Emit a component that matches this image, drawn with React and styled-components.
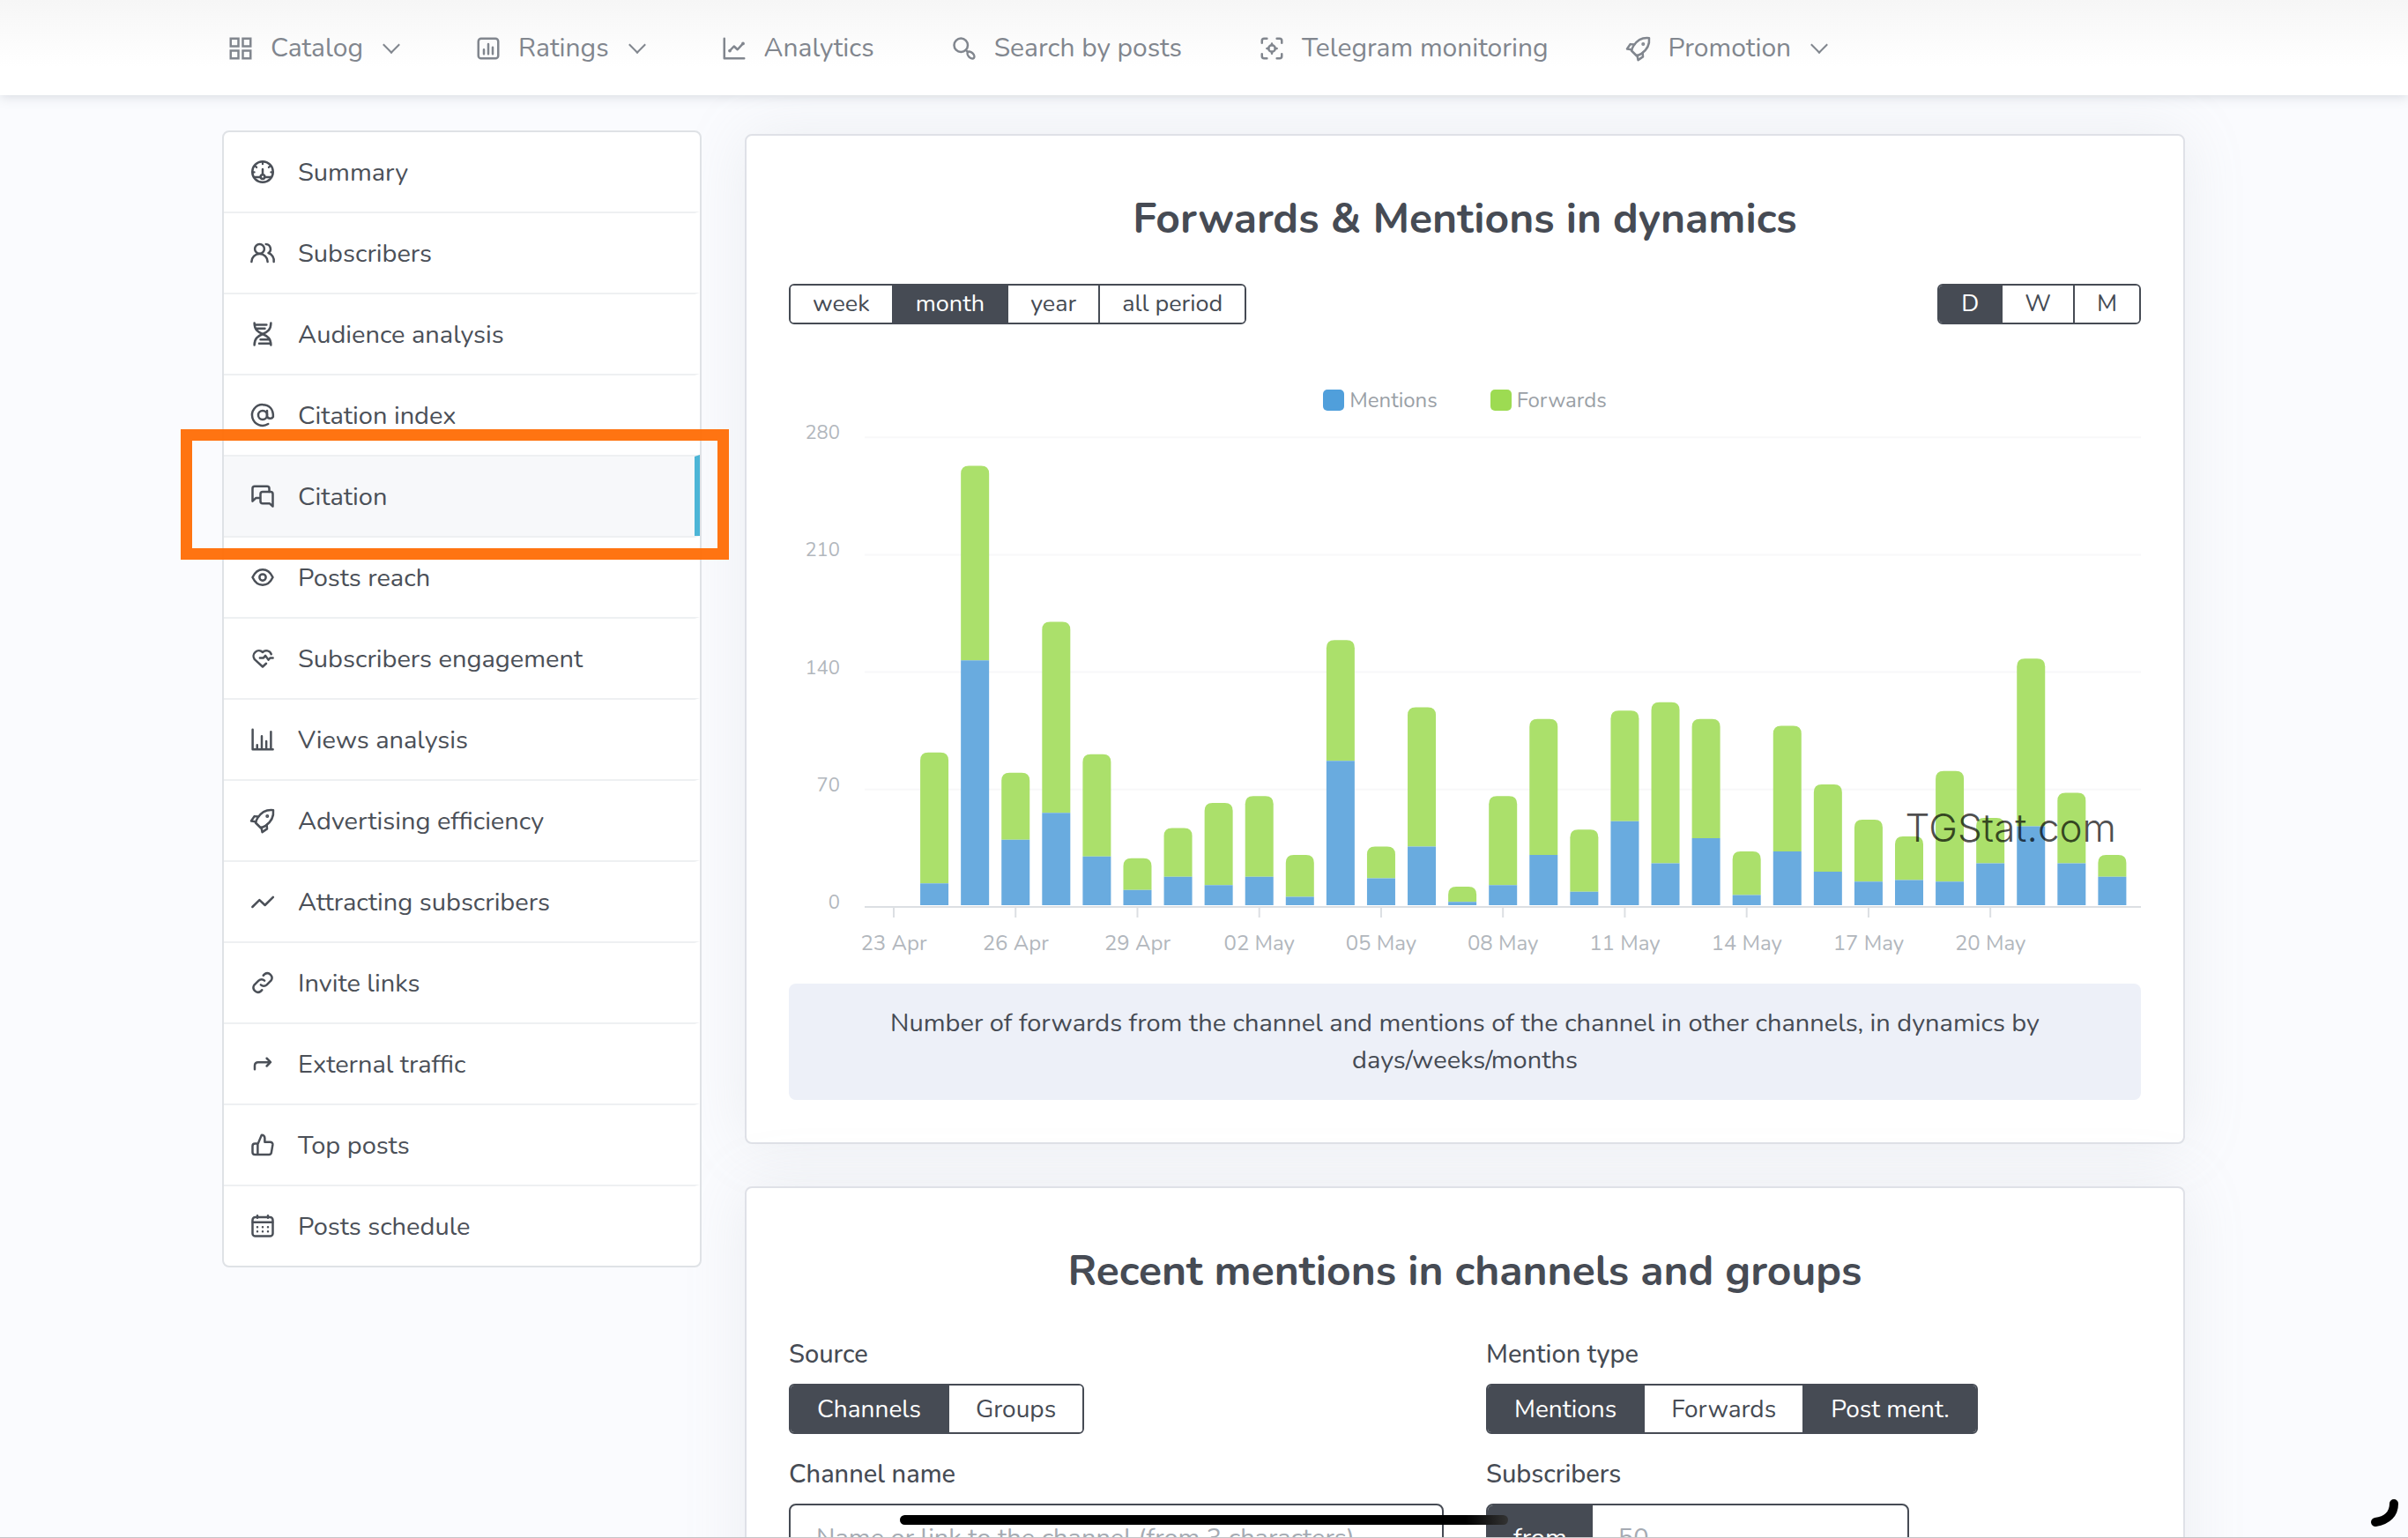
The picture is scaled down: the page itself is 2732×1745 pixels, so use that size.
import React, { useState } from "react";
import styled, { createGlobalStyle } from "styled-components";

const ink = "#464b54";
const sans = `Nunito, Lato, "Open Sans", sans-serif`;

const GlobalStyle = createGlobalStyle`
  *, *::before, *::after { box-sizing: border-box; }
  html, body { margin: 0; height: 100%; }
  body {
    overflow: hidden;
    background: #fafbfe;
    color: ${ink};
    font-family: ${sans};
    font-size: 29px;
  }
  button, input { font: inherit; color: inherit; }
`;

/* ---------- icons ---------- */

const IconSvg = styled.svg`
  flex: none;
  width: 30px;
  height: 30px;
  fill: none;
  stroke: currentColor;
  stroke-width: 2;
  stroke-linecap: round;
  stroke-linejoin: round;
`;

const icons = {
  apps: <path strokeLinejoin="miter" d="M3 3h7v7H3zM14 3h7v7h-7zM3 14h7v7H3zM14 14h7v7h-7z" />,
  chart: (
    <>
      <rect x="3" y="3" width="18" height="18" rx="2.5" />
      <path d="M8 13v4M12 8v9M16 11v6" />
    </>
  ),
  analytics: (
    <>
      <path d="M3 3v18h18M8 14l3.800-4 3.200 3 5-5.500" />
      <path d="M8 14v.01M20 7.500v.01" strokeWidth="3" />
    </>
  ),
  search: (
    <>
      <circle cx="9" cy="9" r="6.2" />
      <path d="M13.500 13.500l1.600 1.600" />
      <ellipse cx="18" cy="18" rx="2.3" ry="3.8" transform="rotate(-45 18 18)" />
    </>
  ),
  focus: (
    <>
      <path d="M3 7V5a2 2 0 0 1 2-2h2.500M16.500 3H19a2 2 0 0 1 2 2v2M21 17v2a2 2 0 0 1-2 2h-2.500M7.500 21H5a2 2 0 0 1-2-2v-2" />
      <circle cx="12" cy="12" r="3" />
      <path d="M12 7.500v1.500M12 15v1.500M7.500 12H9M15 12h1.500" />
    </>
  ),
  rocket: (
    <>
      <path d="M21.600 2.500C15 1.800 11 4 7.500 9.500c-1 1.600-1.600 3-1.900 4.500l4.600 4.600c1.500-.3 3-.9 4.500-1.900C20 13 22.300 9 21.600 2.500z" />
      <path d="M8.200 8.400l-3.700-.3-2.900 4.300 4.200.7M15.700 15.900l.3 3.600-4.400 3-.8-4.200" />
      <circle cx="16.2" cy="7.9" r="0.6" fill="currentColor" />
    </>
  ),
  dashboard: (
    <>
      <circle cx="12" cy="12" r="9.4" />
      <path d="M4 16.800h5.500M14.500 16.800H20M12 14V9.500" />
      <path strokeWidth="1.7" d="M12 3v2M5.600 7l.9.900M18.400 7l-.9.900M3 12.300h1.500M19.500 12.300H21" />
      <circle cx="12" cy="16.4" r="1.9" />
    </>
  ),
  users: (
    <>
      <circle cx="9.2" cy="8.3" r="4.3" />
      <path d="M1.900 20a7.300 7.300 0 0 1 14.600 0M15 4.100a4.300 4.300 0 0 1 2.200 7.900 7.300 7.300 0 0 1 4.900 8" />
    </>
  ),
  dna: (
    <>
      <path d="M4.500 2c0 6 3 8 7.500 10s7.500 4 7.500 10M19.500 2c0 6-3 8-7.500 10s-7.500 4-7.500 10" />
      <path d="M5.500 3.500h10M6.500 7h7.500M8.800 20.500h9.700M10 17h7.500" />
    </>
  ),
  at: (
    <>
      <circle cx="12" cy="12" r="4" />
      <path d="M16 8v5a3 3 0 0 0 5.500.5c.3-7-3.500-11-9.500-11a9.500 9.500 0 1 0 5 17.500" />
    </>
  ),
  chats: (
    <>
      <path d="M9 13.500H6l-3.200 3V5a2 2 0 0 1 2-2H16a2 2 0 0 1 2 2v3" />
      <path d="M21.200 21.200l-3-2.700H12a2 2 0 0 1-2-2V10a2 2 0 0 1 2-2h7.200a2 2 0 0 1 2 2z" />
    </>
  ),
  eye: (
    <>
      <path d="M2.800 12C5 7.400 8.300 5 12 5s7 2.400 9.200 7c-2.200 4.600-5.500 7-9.200 7s-7-2.400-9.200-7z" />
      <circle cx="12" cy="12" r="2.9" />
    </>
  ),
  heart: (
    <>
      <path d="M19.800 8.200A4.700 4.700 0 0 0 12 6.400a4.900 4.900 0 0 0-7.300 6.500L12 19.600l3.200-3" />
      <path d="M9.500 11.500h3.300l1.700-2 2.700 3.800 1.600-1.700h2.500" />
    </>
  ),
  bars: <path d="M2.900 3v18h18.400M7 20v-3M11.200 20V9M15.300 20v-6.500M19.500 20V5" />,
  trend: <path d="M2.700 16.800l6.400-6.300 5 4.700 7.400-7.300" />,
  link: (
    <path d="M10.300 13.900a4 4 0 0 0 5.400 0l4-4a4.200 4.200 0 0 0-5.800-5.800L12.600 5.400M13.700 10.100a4 4 0 0 0-5.400 0l-4 4a4.200 4.200 0 0 0 5.800 5.800l1.300-1.300" />
  ),
  forward: <path d="M4.800 17v-3.500a3 3 0 0 1 3-3h11.200M15.700 7l3.500 3.500-3.500 3.500" />,
  like: (
    <path d="M7.500 20.800V11.500l3.600-8.600a2.800 2.800 0 0 1 2.800 2.800v3.700h5a2.200 2.200 0 0 1 2.200 2.500l-1.200 7a2.200 2.200 0 0 1-2.200 1.900zM7.500 10.700H5a2.200 2.200 0 0 0-2.200 2.200v5.700A2.200 2.200 0 0 0 5 20.800h2.500" />
  ),
  calendar: (
    <>
      <rect x="2.8" y="4" width="18.4" height="17.2" rx="2.5" />
      <path d="M3 8.500h18M7.200 2.500v2M16.800 2.500v2M7.200 13v.01M12 13v.01M16.800 13v.01M7.200 17v.01M12 17v.01M16.800 17v.01" />
    </>
  ),
};

const Icon = ({ name }) => (
  <IconSvg viewBox="0 0 24 24" aria-hidden="true">{icons[name]}</IconSvg>
);

/* ---------- header ---------- */

const Header = styled.header`
  position: relative;
  z-index: 2;
  padding: 0 258px;
  background: linear-gradient(#f6f6f6, #fff 76px);
  box-shadow: 0 2px 12px rgba(120, 126, 140, 0.25);
`;

const Nav = styled.nav`
  display: flex;
  gap: 87px;
  height: 108px;
  padding-top: 2px;
  align-items: center;
`;

const NavLink = styled.a`
  display: flex;
  align-items: center;
  gap: 19px;
  color: #81868e;
  font-size: 30px;
  line-height: 40px;
  text-decoration: none;
  white-space: nowrap;
`;

const Chevron = styled.span`
  width: 14px;
  height: 14px;
  margin: 0 1px 8px 6px;
  border: solid currentColor;
  border-width: 0 2px 2px 0;
  transform: rotate(45deg);
`;

/* ---------- page ---------- */

const Page = styled.div`
  display: flex;
  align-items: flex-start;
  gap: 49px;
  padding: 40px 253px 0 252px;
`;

const Sidebar = styled.aside`
  position: relative;
  flex: 0 0 544px;
`;

const Menu = styled.ul`
  margin: 0;
  padding: 0;
  list-style: none;
  background: #fff;
  border: 2px solid #dfe2e6;
  border-radius: 8px;
`;

const MenuItem = styled.li`
  & + & a { border-top: 2px solid #eef0f2; }
`;

const MenuLink = styled.a`
  display: flex;
  align-items: center;
  gap: 25px;
  height: 92px;
  padding: 0 29px;
  border-right: 6px solid ${(p) => (p.$active ? "#4cb5d6" : "transparent")};
  background: ${(p) => (p.$active ? "#f7f8fa" : "transparent")};
  color: #4b5058;
  text-decoration: none;
  white-space: nowrap;

  ${MenuItem}:first-child & { height: 90px; }
`;

const Highlight = styled.div`
  position: absolute;
  z-index: 3;
  top: 339px;
  left: -47px;
  right: -31px;
  height: 148px;
  border: 13px solid rgba(255, 110, 8, 0.96);
  pointer-events: none;
`;

const Main = styled.main`
  display: grid;
  flex: 1;
  min-width: 0;
  gap: 48px;
  padding-top: 4px;
`;

const Card = styled.section`
  padding: 62px 48px 48px;
  background: #fff;
  border: 2px solid #dfe1e7;
  border-radius: 8px;
  box-shadow: 0 0 70px rgba(154, 161, 171, 0.15);
`;

const Title = styled.h2`
  margin: 0 0 42px;
  color: #464b54;
  font-size: 48px;
  font-weight: 700;
  line-height: 64px;
  text-align: center;
`;

const Toolbar = styled.div`
  display: flex;
  justify-content: space-between;
  margin-bottom: 70px;
`;

const Group = styled.div`
  display: inline-flex;
  overflow: hidden;
  border: 2px solid ${ink};
  border-radius: 6px;
  vertical-align: top;
`;

const Segment = styled.button`
  height: ${(p) => (p.$large ? 53 : 42)}px;
  padding: 0 ${(p) => (p.$large ? 30 : 25)}px;
  border: 0;
  background: ${(p) => (p.$active ? ink : "#fff")};
  color: ${(p) => (p.$active ? "#fff" : ink)};
  font-size: ${(p) => (p.$large ? 28 : 27)}px;
  line-height: 40px;
  white-space: nowrap;
  cursor: pointer;

  & + & { border-left: 2px solid ${ink}; }
`;

const Legend = styled.div`
  display: flex;
  justify-content: center;
  gap: 60px;
  color: #9a9fa6;
  font-size: 24px;
  line-height: 32px;
`;

const LegendItem = styled.span`
  display: flex;
  align-items: center;
  gap: 6px;

  &::before {
    content: "";
    width: 24px;
    height: 24px;
    border-radius: 5px;
    background: ${(p) => p.$color};
  }
`;

const ChartSvg = styled.svg`
  display: block;
  width: 100%;
  height: auto;
  margin-bottom: 24px;
  font-family: ${sans};
  font-size: 24px;
`;

const Note = styled.p`
  margin: 0;
  padding: 24px 60px;
  border-radius: 8px;
  background: #edf0f8;
  color: ${ink};
  line-height: 42px;
  text-align: center;
`;

const Form = styled.form`
  display: grid;
  grid-template-columns: repeat(2, minmax(0, 1fr));
  column-gap: 48px;
  row-gap: 25px;
`;

const Field = styled.div`
  min-width: 0;
`;

const Label = styled.label`
  display: block;
  margin-bottom: 12px;
  font-weight: 500;
  line-height: 42px;
`;

const InputRow = styled.div`
  display: flex;
  width: ${(p) => (p.$short ? "480px" : "100%")};
  height: 76px;
  overflow: hidden;
  border: 2px solid ${ink};
  border-radius: 8px;
  background: #fff;
`;

const Prefix = styled.span`
  display: flex;
  align-items: center;
  padding: 0 29px;
  background: ${ink};
  color: #fff;
`;

const TextInput = styled.input`
  flex: 1;
  min-width: 0;
  padding: 0 29px;
  border: 0;
  outline: 0;
  background: transparent;

  &::placeholder { color: #a5abb3; opacity: 1; }
`;

/* ---------- screen overlay ---------- */

const HomeBar = styled.div`
  position: fixed;
  z-index: 4;
  left: 50%;
  bottom: 15px;
  width: 690px;
  height: 11px;
  border-radius: 6px;
  background: linear-gradient(90deg, #000 93%, #333);
  transform: translateX(-50%);
`;

const CornerMark = styled.svg`
  position: fixed;
  z-index: 4;
  right: 10px;
  bottom: 9px;
  width: 34px;
  height: 36px;
`;

const BottomEdge = styled.div`
  position: fixed;
  z-index: 4;
  inset: auto 0 0;
  height: 1px;
  background: #c4c6c8;
`;

/* ---------- data ---------- */

const navItems = [
  ["apps", "Catalog", true],
  ["chart", "Ratings", true],
  ["analytics", "Analytics"],
  ["search", "Search by posts"],
  ["focus", "Telegram monitoring"],
  ["rocket", "Promotion", true],
];

const menuItems = [
  ["dashboard", "Summary"],
  ["users", "Subscribers"],
  ["dna", "Audience analysis"],
  ["at", "Citation index"],
  ["chats", "Citation"],
  ["eye", "Posts reach"],
  ["heart", "Subscribers engagement"],
  ["bars", "Views analysis"],
  ["rocket", "Advertising efficiency"],
  ["trend", "Attracting subscribers"],
  ["link", "Invite links"],
  ["forward", "External traffic"],
  ["like", "Top posts"],
  ["calendar", "Posts schedule"],
];

// [total, mentions] per day, starting 23 Apr
const days = [
  [0, 0], [91, 13], [262, 146], [79, 39], [169, 55], [90, 29], [28, 9], [46, 17],
  [61, 12], [65, 17], [30, 5], [158, 86], [35, 16], [118, 35], [11, 2], [65, 12],
  [111, 30], [45, 8], [116, 50], [121, 25], [111, 40], [32, 6], [107, 32], [72, 20],
  [51, 14], [41, 15], [80, 14], [52, 25], [147, 47], [67, 25], [30, 17],
];

const ticks = ["23 Apr", "26 Apr", "29 Apr", "02 May", "05 May", "08 May", "11 May", "14 May", "17 May", "20 May"];

/* ---------- chart ---------- */

const AXIS = 559;
const BAR_BASE = 557;
const UNIT = 133.2 / 70;
const xOf = (i) => 119 + i * 46.08;

function Bar({ i, total, mentions }) {
  const x = xOf(i) - 16;
  const top = BAR_BASE - total * UNIT;
  const mid = BAR_BASE - mentions * UNIT;
  return (
    <g>
      <path
        fill="#abe06b"
        d={`M${x} ${mid}V${top + 9}q0-9 9-9h14q9 0 9 9V${mid}z`}
      />
      <path fill="#69abdf" d={`M${x} ${mid}h32V${BAR_BASE}h-32z`} />
    </g>
  );
}

function Chart() {
  return (
    <ChartSvg viewBox="0 0 1534 622" role="img" aria-label="Forwards and mentions by day">
      {[280, 210, 140, 70].map((v) => (
        <path key={v} d={`M86 ${AXIS - v * UNIT}H1534`} stroke="#f8f8f9" strokeWidth="2" />
      ))}
      {[280, 210, 140, 70, 0].map((v) => (
        <text key={v} x="58" y={AXIS - v * UNIT + 2} textAnchor="end" fontSize="22" fill="#b2b7bd">{v}</text>
      ))}
      {days.map(([total, mentions], i) =>
        total ? <Bar key={i} i={i} total={total} mentions={mentions} /> : null
      )}
      <path d={`M86 ${AXIS}H1534`} stroke="#dcdfe3" strokeWidth="2" />
      {ticks.map((t, k) => (
        <g key={t}>
          <path d={`M${xOf(k * 3)} ${AXIS}v12`} stroke="#dcdfe3" strokeWidth="2" />
          <text x={xOf(k * 3)} y="608" textAnchor="middle" fill="#b2b7bd">{t}</text>
        </g>
      ))}
      <text
        x="1506"
        y="485"
        textAnchor="end"
        fill="#000"
        fillOpacity="0.7"
        fontFamily="Inter, Liberation Sans, sans-serif"
        fontWeight="300"
        fontSize="44"
      >
        TGStat.com
      </text>
    </ChartSvg>
  );
}

/* ---------- app ---------- */

function Segments({ options, value, onChange, large, label, multiple }) {
  return (
    <Group role="group" aria-label={label}>
      {options.map((o) => {
        const active = multiple ? value.includes(o) : value === o;
        return (
          <Segment
            key={o}
            type="button"
            $large={large}
            $active={active}
            aria-pressed={active}
            onClick={() => {
              if (!multiple) onChange(o);
              else onChange(active ? value.filter((v) => v !== o) : [...value, o]);
            }}
          >
            {o}
          </Segment>
        );
      })}
    </Group>
  );
}

export default function App() {
  const [period, setPeriod] = useState("month");
  const [step, setStep] = useState("D");
  const [source, setSource] = useState("Channels");
  const [types, setTypes] = useState(["Mentions", "Post ment."]);

  return (
    <>
      <GlobalStyle />
      <Header>
        <Nav>
          {navItems.map(([icon, text, more]) => (
            <NavLink key={text} href="#">
              <Icon name={icon} />
              {text}
              {more && <Chevron />}
            </NavLink>
          ))}
        </Nav>
      </Header>
      <Page>
        <Sidebar>
          <Menu>
            {menuItems.map(([icon, text]) => (
              <MenuItem key={text}>
                <MenuLink href="#" $active={text === "Citation"}>
                  <Icon name={icon} />
                  {text}
                </MenuLink>
              </MenuItem>
            ))}
          </Menu>
          <Highlight />
        </Sidebar>
        <Main>
          <Card>
            <Title>Forwards &amp; Mentions in dynamics</Title>
            <Toolbar>
              <Segments label="Period" options={["week", "month", "year", "all period"]} value={period} onChange={setPeriod} />
              <Segments label="Step" options={["D", "W", "M"]} value={step} onChange={setStep} />
            </Toolbar>
            <Legend>
              <LegendItem $color="#509fdb">Mentions</LegendItem>
              <LegendItem $color="#9ddb52">Forwards</LegendItem>
            </Legend>
            <Chart />
            <Note>
              Number of forwards from the channel and mentions of the channel in other channels, in dynamics by
              <br />
              days/weeks/months
            </Note>
          </Card>
          <Card>
            <Title>Recent mentions in channels and groups</Title>
            <Form>
              <Field>
                <Label as="div">Source</Label>
                <Segments large label="Source" options={["Channels", "Groups"]} value={source} onChange={setSource} />
              </Field>
              <Field>
                <Label as="div">Mention type</Label>
                <Segments large multiple label="Mention type" options={["Mentions", "Forwards", "Post ment."]} value={types} onChange={setTypes} />
              </Field>
              <Field>
                <Label htmlFor="channel">Channel name</Label>
                <InputRow>
                  <TextInput id="channel" placeholder="Name or link to the channel (from 3 characters)" />
                </InputRow>
              </Field>
              <Field>
                <Label htmlFor="subs">Subscribers</Label>
                <InputRow $short>
                  <Prefix>from</Prefix>
                  <TextInput id="subs" placeholder="50" />
                </InputRow>
              </Field>
            </Form>
          </Card>
        </Main>
      </Page>
      <HomeBar />
      <CornerMark viewBox="0 0 34 36" aria-hidden="true">
        <path d="M28 6C28 17 21 25 7 27" fill="none" stroke="#000" strokeWidth="10" strokeLinecap="round" />
      </CornerMark>
      <BottomEdge />
    </>
  );
}
